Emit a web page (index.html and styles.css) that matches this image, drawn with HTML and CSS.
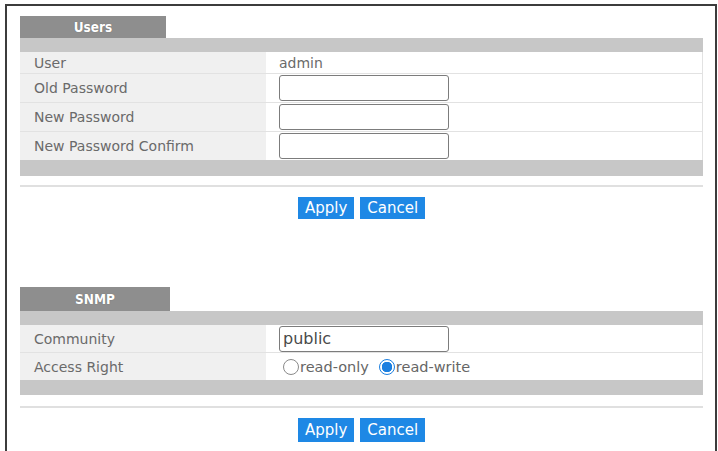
FILE: index.html
```html
<!DOCTYPE html>
<html>
<head>
<meta charset="utf-8">
<link rel="stylesheet" href="styles.css">
</head>
<body>
<div class="frame">
  <section class="panel panel-users">
    <div class="tab">Users</div>
    <div class="bar bar-head"></div>
    <div class="grid">
      <div class="lbl row-user">User</div>
      <div class="val row-user"><span class="plain">admin</span></div>
      <div class="lbl row-pw">Old Password</div>
      <div class="val row-pw"><input class="field" type="password"></div>
      <div class="lbl row-pw">New Password</div>
      <div class="val row-pw"><input class="field" type="password"></div>
      <div class="lbl row-pw2">New Password Confirm</div>
      <div class="val row-pw2"><input class="field" type="password"></div>
    </div>
    <div class="bar bar-foot"></div>
    <div class="sep"></div>
    <div class="actions">
      <button class="btn">Apply</button>
      <button class="btn">Cancel</button>
    </div>
  </section>

  <section class="panel panel-snmp">
    <div class="tab tab-snmp">SNMP</div>
    <div class="bar bar-head"></div>
    <div class="grid">
      <div class="lbl row-snmp">Community</div>
      <div class="val row-snmp"><input class="field field-text" type="text" value="public"></div>
      <div class="lbl row-snmp">Access Right</div>
      <div class="val row-snmp">
        <label class="radio"><span class="dot"></span>read-only</label>
        <label class="radio"><span class="dot dot-on"></span>read-write</label>
      </div>
    </div>
    <div class="bar bar-foot bar-foot2"></div>
    <div class="sep sep2"></div>
    <div class="actions actions2">
      <button class="btn btn-tall">Apply</button>
      <button class="btn btn-tall">Cancel</button>
    </div>
  </section>
</div>
</body>
</html>
```

FILE: styles.css
```css
html, body {
  margin: 0;
  padding: 0;
  background: #ffffff;
  overflow: hidden;
}

body {
  font-family: "DejaVu Sans", sans-serif;
  color: #666666;
}

.frame {
  margin: 4px 1px 0 5px;
  border: 2px solid #3c3c3c;
  border-bottom: none;
  height: 435px;
  padding: 10px 12px 0 13px;
}

.panel {
  width: 683px;
}

.panel-snmp {
  margin-top: 68px;
}

.tab {
  width: 146px;
  height: 22px;
  background: #8e8e8e;
  color: #ffffff;
  font-family: "DejaVu Sans Condensed", "DejaVu Sans", sans-serif;
  font-stretch: condensed;
  font-weight: bold;
  font-size: 13.5px;
  display: flex;
  align-items: center;
  justify-content: center;
  text-shadow: 0 0 1px rgba(0,0,0,0.3);
}

.tab-snmp {
  width: 150px;
  height: 24px;
}

.bar {
  background: #c7c7c7;
}

.bar-head {
  height: 14px;
}

.bar-foot {
  height: 16px;
}

.bar-foot2 {
  height: 15px;
}

.grid {
  display: grid;
  grid-template-columns: 246px 1fr;
}

.lbl {
  background: #f0f0f0;
  font-size: 14px;
  color: #6a6a6a;
  padding-left: 14px;
  display: flex;
  align-items: center;
  border-bottom: 1px solid #e2e2e2;
}

.val {
  display: flex;
  align-items: center;
  padding-left: 13px;
  border-bottom: 1px solid #e2e2e2;
  border-right: 1px solid #e2e2e2;
}

.grid > div:nth-last-child(-n+2) {
  border-bottom: none;
}

.row-user { height: 21px; }
.row-pw { height: 28px; }
.row-pw2 { height: 28px; }
.row-snmp { height: 27px; }

.plain {
  font-size: 14px;
  color: #6a6a6a;
}

.field {
  box-sizing: border-box;
  width: 170px;
  height: 26px;
  border: 1px solid #7c7c7c;
  border-radius: 3px;
  background: #ffffff;
  margin: 0;
  padding: 0 4px;
}

.field-text {
  font-family: "DejaVu Sans", sans-serif;
  font-size: 16px;
  color: #4a4a4a;
  padding-left: 3px;
}

.radio {
  display: flex;
  align-items: center;
  font-size: 14.5px;
  color: #666666;
  margin-right: 10px;
}

.radio:first-child {
  margin-left: 4px;
}

.dot {
  box-sizing: border-box;
  width: 16px;
  height: 16px;
  border-radius: 50%;
  border: 1px solid #8a8a8a;
  background: #ffffff;
  margin-right: 1px;
}

.dot-on {
  border: 1px solid #1c7fe0;
  background: radial-gradient(circle, #1c7fe0 0 5px, #ffffff 5.5px);
}

.sep {
  height: 2px;
  background: #e0e0e0;
  margin-top: 9px;
}

.sep2 {
  margin-top: 11px;
}

.actions {
  display: flex;
  justify-content: center;
  gap: 6px;
  margin-top: 10px;
}

.actions2 {
  margin-top: 10px;
}

.btn {
  height: 22px;
  padding: 0 7px;
  border: none;
  border-radius: 0;
  background: #1e88e5;
  color: #ffffff;
  font-family: "DejaVu Sans", sans-serif;
  font-size: 15px;
  line-height: 22px;
  cursor: pointer;
}

.btn-tall {
  height: 24px;
  line-height: 24px;
}
```
